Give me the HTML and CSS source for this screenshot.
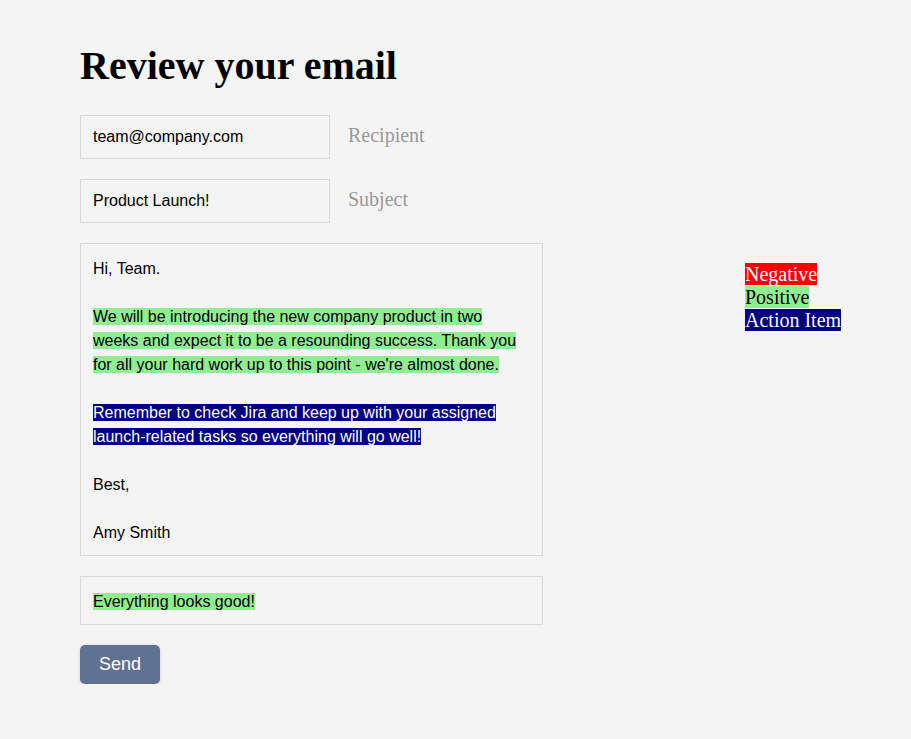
FILE: index.html
```html
<!DOCTYPE html>
<html>
<head>
<meta charset="utf-8">
<link rel="stylesheet" href="styles.css">
</head>
<body>
<div class="page">
  <h1 class="title">Review your email</h1>
  <div class="layout">
    <div class="main">
      <div class="field-row">
        <div class="field">team@company.com</div>
        <span class="label">Recipient</span>
      </div>
      <div class="field-row">
        <div class="field">Product Launch!</div>
        <span class="label">Subject</span>
      </div>
      <div class="body-box">
        <p>Hi, Team.</p>
        <p><span class="hl-pos">We will be introducing the new company product in two weeks and expect it to be a resounding success. Thank you for all your hard work up to this point - we're almost done.</span></p>
        <p><span class="hl-act">Remember to check Jira and keep up with your assigned launch-related tasks so everything will go well!</span></p>
        <p>Best,</p>
        <p>Amy Smith</p>
      </div>
      <div class="feedback-box"><span class="hl-pos">Everything looks good!</span></div>
      <button class="send">Send</button>
    </div>
    <div class="legend">
      <div><span class="lg-neg">Negative</span></div>
      <div><span class="lg-pos">Positive</span></div>
      <div><span class="lg-act">Action Item</span></div>
    </div>
  </div>
</div>
</body>
</html>
```
FILE: styles.css
```css
html, body {
  margin: 0;
  padding: 0;
  background: #f4f4f4;
}
body {
  font-family: "Liberation Serif", serif;
  color: #000;
}
.page {
  padding: 43px 0 0 80px;
}
.title {
  margin: 0;
  font-family: "Liberation Serif", serif;
  font-weight: bold;
  font-size: 40px;
  line-height: 46px;
}
.layout {
  display: flex;
  align-items: flex-start;
  margin-top: 26px;
}
.main {
  width: 463px;
  display: flex;
  flex-direction: column;
  gap: 20px;
}
.field-row {
  display: flex;
  align-items: center;
  gap: 18px;
}
.field {
  width: 250px;
  height: 44px;
  box-sizing: border-box;
  border: 1px solid #d9d9d9;
  padding: 0 12px;
  display: flex;
  align-items: center;
  font-family: "Liberation Sans", Arial, sans-serif;
  font-size: 16px;
}
.label {
  font-family: "Liberation Serif", serif;
  font-size: 20px;
  color: #999;
  position: relative;
  top: -2px;
}
.body-box, .feedback-box {
  border: 1px solid #d9d9d9;
  font-family: "Liberation Sans", Arial, sans-serif;
  font-size: 16px;
  line-height: 24px;
}
.body-box {
  padding: 13px 12px 10px;
}
.feedback-box {
  padding: 13px 12px 10px;
}
.body-box p {
  margin: 0 0 24px 0;
}
.body-box p:last-child {
  margin-bottom: 0;
}
.hl-pos {
  background: #90ee90;
}
.hl-act {
  background: #000080;
  color: #fff;
}
.send {
  align-self: flex-start;
  width: 80px;
  height: 39px;
  border: none;
  border-radius: 5px;
  background: #5f7292;
  color: #fff;
  font-family: "Liberation Sans", Arial, sans-serif;
  font-size: 18px;
  padding: 0;
  box-shadow: 0 1px 4px rgba(0,0,0,0.15);
}
.legend {
  margin-left: 202px;
  margin-top: 148px;
  font-family: "Liberation Serif", serif;
  font-size: 20px;
}
.lg-neg {
  background: #ff0000;
  color: #fff;
}
.lg-pos {
  background: #90ee90;
}
.lg-act {
  background: #000080;
  color: #fff;
}
```
